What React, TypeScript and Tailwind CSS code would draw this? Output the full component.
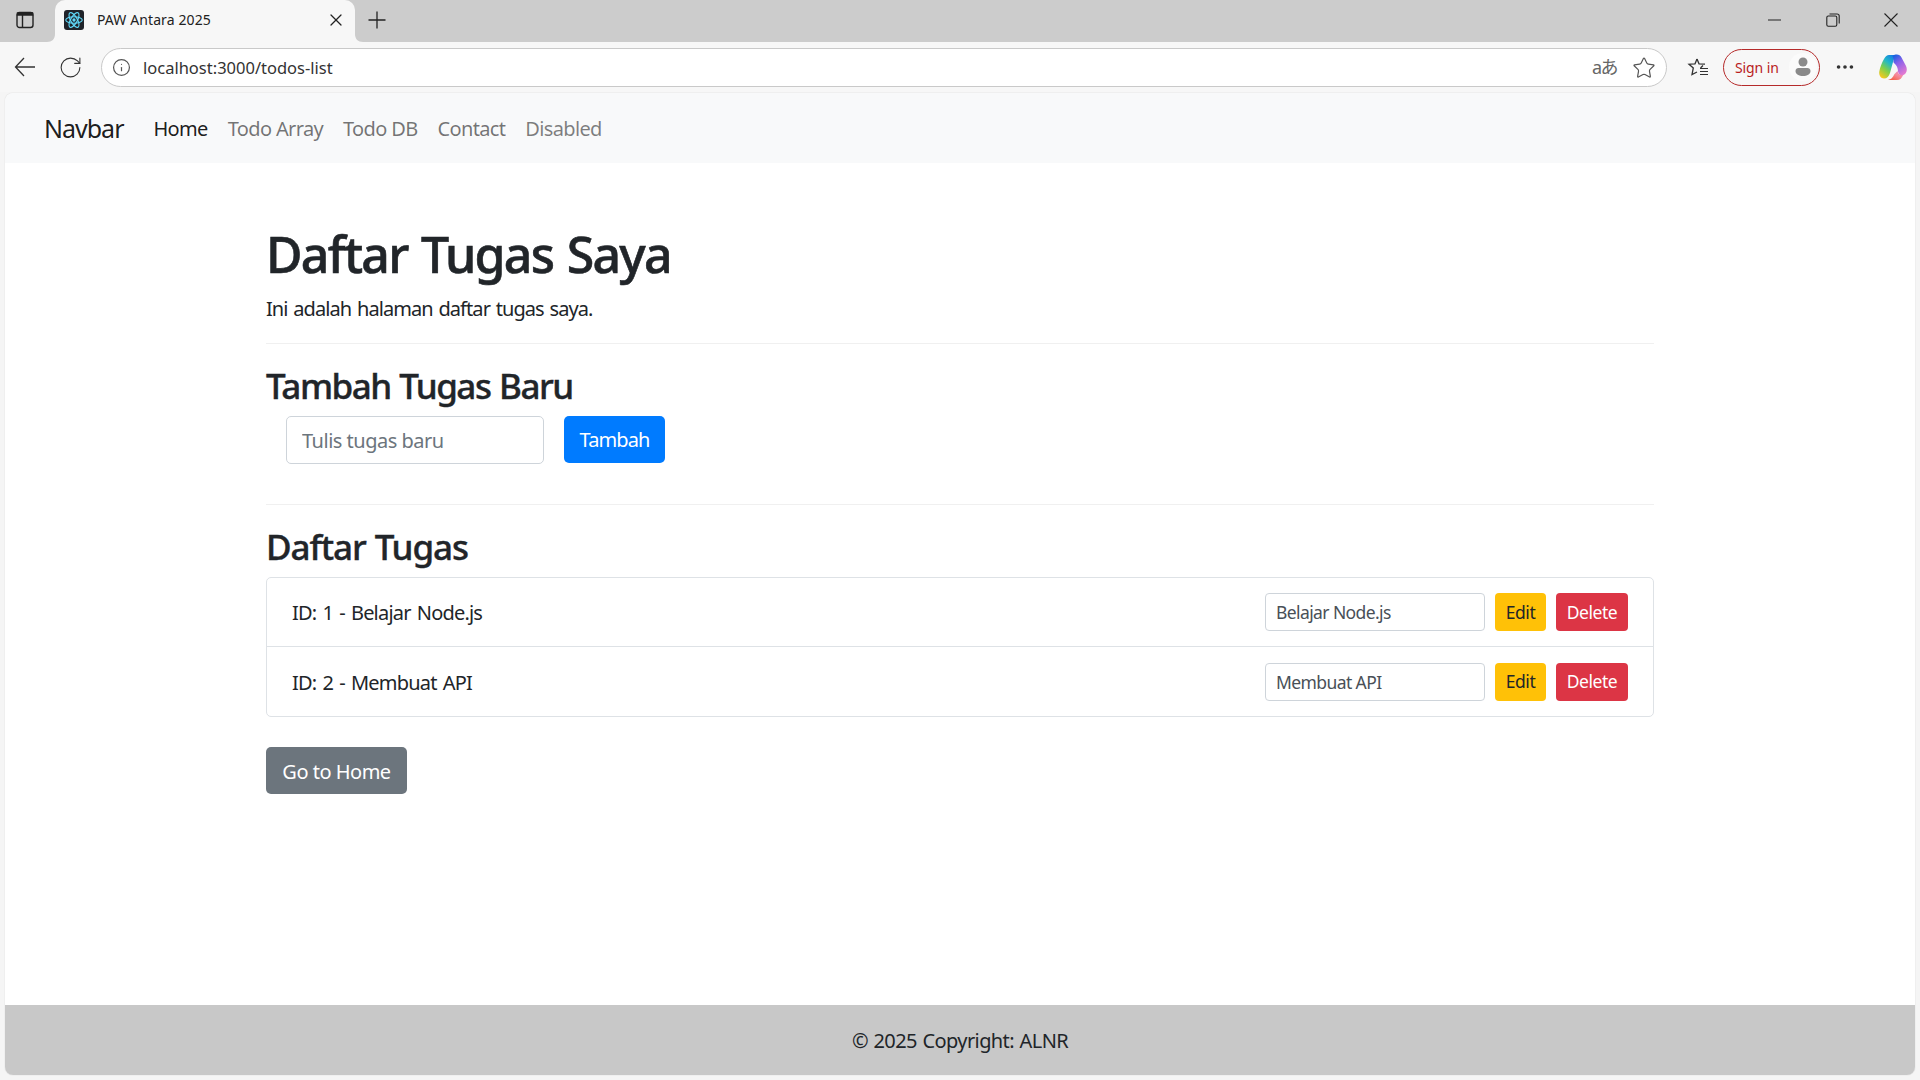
import { RotateCw, Info, Star, X, MoreHorizontal } from 'lucide-react'

function ReactFavicon() {
  return (
    <div className="w-5 h-5 rounded-[3px] bg-[#20232a] flex items-center justify-center">
      <svg width="18" height="18" viewBox="0 0 24 24" fill="none" stroke="#61dafb" strokeWidth="1.5">
        <circle cx="12" cy="12" r="2.2" fill="#61dafb" stroke="none" />
        <ellipse cx="12" cy="12" rx="11" ry="4.4" />
        <ellipse cx="12" cy="12" rx="11" ry="4.4" transform="rotate(60 12 12)" />
        <ellipse cx="12" cy="12" rx="11" ry="4.4" transform="rotate(120 12 12)" />
      </svg>
    </div>
  )
}

function CopilotLogo() {
  return (
    <svg width="28" height="26" viewBox="0 0 28 26">
      <defs>
        <linearGradient id="cpA" x1="0.8" y1="0" x2="0.2" y2="1">
          <stop offset="0" stopColor="#1477e6" />
          <stop offset="0.35" stopColor="#22b8c8" />
          <stop offset="0.65" stopColor="#7fd04a" />
          <stop offset="1" stopColor="#f7c81e" />
        </linearGradient>
        <linearGradient id="cpB" x1="0.2" y1="0" x2="0.7" y2="1">
          <stop offset="0" stopColor="#1660e0" />
          <stop offset="0.4" stopColor="#8a62ea" />
          <stop offset="1" stopColor="#e77bd0" />
        </linearGradient>
        <linearGradient id="cpC" x1="0" y1="1" x2="1" y2="0">
          <stop offset="0" stopColor="#f4552f" />
          <stop offset="0.6" stopColor="#f58ca0" />
          <stop offset="1" stopColor="#e77bd0" />
        </linearGradient>
      </defs>
      <path d="M10 1 H18 C16 2.500 15 4.500 14 8 L11 19 C10 22.500 8 24.500 5 24.500 C1.500 24.500 -0.300 21 0.300 17.500 C1 13 3 8.500 5 5 C6.500 2.500 8 1 10 1 z" fill="url(#cpA)" />
      <path d="M13.500 2 C17 -0.500 21 0.200 22.500 3.500 L27 12 C28.800 16 27.500 20.500 23.500 21.500 C21 21.500 19.500 20 19 17.500 C19 14 17.500 11 15.500 9.500 C14.500 8.800 14.300 8 14.500 7 C14.800 5 14.300 3.500 13.500 2 z" fill="url(#cpB)" />
      <path d="M9 26 H18 C21 26 23 24 24 21 C21 21.500 19 20 18.500 17 L15.500 20 C14 23.500 12 25.500 9 26 z" fill="url(#cpC)" />
    </svg>
  )
}

function Toolbar() {
  return (
    <div className="h-[50px] bg-[#f7f7f7] flex items-center text-[#333]">
      <div className="w-[50px] flex justify-center">
        <svg width="22" height="20" viewBox="0 0 22 20" fill="none" stroke="#333" strokeWidth="1.300">
          <path d="M10 1 L1.500 10 L10 19 M1.500 10 H21" />
        </svg>
      </div>
      <div className="w-[41px] flex justify-center">
        <RotateCw size={25} strokeWidth={1.050} />
      </div>
      <div className="ml-[10px] w-[1566px] h-[39px] mt-[1px] rounded-full border border-[#c9c9c9] bg-white flex items-center pl-[10px] pr-[8px]">
        <Info size={19} strokeWidth={1.500} className="text-[#555]" />
        <span className="ml-[12px] mt-[1px] text-[16.500px] text-[#333] whitespace-nowrap">
          localhost:3000/todos-list
        </span>
        <span className="ml-auto text-[18px] text-[#666] font-['Noto_Sans','Noto_Sans_CJK_JP',sans-serif] tracking-[-1.500px]">aあ</span>
        <Star size={24} strokeWidth={1.200} className="ml-[15px] mr-[2px] text-[#555]" />
      </div>
      <svg className="ml-[20px]" width="22" height="22" viewBox="0 0 22 22" fill="none" stroke="#333" strokeWidth="1.300">
        <path d="M10 3 L12 7.800 L18 8.200 M13.500 12 L16 9.500 M10 3 L8 7.800 L2 8.200 L6.300 12 L5 18.500 L10 16" />
        <path d="M13 12.500 h8 M13 15.500 h8 M13 18.500 h8" strokeWidth="1" />
      </svg>
      <div className="ml-[14px] w-[97px] h-[37px] rounded-full border-[1.500px] border-[#b52a2a] flex items-center pl-[11px] pr-[2px]">
        <span className="text-[14px] text-[#b91c1c] tracking-[-0.1px] whitespace-nowrap">Sign in</span>
        <div className="ml-auto w-[28px] h-[28px] rounded-full bg-[#fbfbfb] flex items-center justify-center">
          <svg width="16" height="20" viewBox="0 0 16 20" fill="#8a8a8a">
            <circle cx="8" cy="5" r="4.500" />
            <path d="M0.500 14 c0 -2 1.500 -3 3 -3 h9 c1.500 0 3 1 3 3 c0 3.500 -3.500 5 -7.500 5 s-7.500 -1.500 -7.500 -5 z" />
          </svg>
        </div>
      </div>
      <MoreHorizontal size={22} strokeWidth={2} className="ml-[14px] text-[#333]" />
      <div className="ml-[23px]">
        <CopilotLogo />
      </div>
    </div>
  )
}

function TabStrip() {
  return (
    <div className="h-[42px] bg-[#cccccc] flex items-center">
      <div className="w-[50px] mr-[5px] flex justify-center mb-[2px]">
        <svg width="18" height="18" viewBox="0 0 18 18" fill="none" stroke="#222" strokeWidth="1.400">
          <rect x="1" y="1.500" width="16" height="15" rx="2.500" />
          <path d="M1.500 4 H16.500 V2 H1.500 z" fill="#222" />
          <path d="M6.500 4 V16" />
        </svg>
      </div>
      <div className="relative w-[300px] h-[42px] bg-[#f7f7f7] rounded-t-[10px] flex items-center pl-[9px] pr-[9px] pb-[2px]">
        <svg className="absolute left-[-8px] bottom-0" width="8" height="8" viewBox="0 0 8 8">
          <path d="M8 0 V8 H0 C5 8 8 5 8 0 z" fill="#f7f7f7" />
        </svg>
        <svg className="absolute right-[-8px] bottom-0" width="8" height="8" viewBox="0 0 8 8">
          <path d="M0 0 V8 H8 C3 8 0 5 0 0 z" fill="#f7f7f7" />
        </svg>
        <ReactFavicon />
        <span className="ml-[13px] mb-[1px] text-[14px] text-[#222] tracking-[0.1px] whitespace-nowrap">PAW Antara 2025</span>
        <X size={20} strokeWidth={1.500} className="ml-auto text-[#222]" />
      </div>
      <div className="ml-[13px] mb-[2px]">
        <svg width="18" height="18" viewBox="0 0 18 18" stroke="#222" strokeWidth="1.300">
          <path d="M9 0.500 V17.500 M0.500 9 H17.500" />
        </svg>
      </div>
      <div className="ml-auto flex items-center mb-[2px]">
        <svg className="mr-[45px]" width="13" height="2" viewBox="0 0 13 2" stroke="#222" strokeWidth="1">
          <path d="M0 1 H13" />
        </svg>
        <svg className="mr-[44px]" width="14" height="14" viewBox="0 0 14 14" fill="none" stroke="#222" strokeWidth="1.100">
          <rect x="0.800" y="3" width="10" height="10.300" rx="1.500" />
          <path d="M3.500 1 H11 C12.500 1 13.200 1.800 13.200 3 V10.500" />
        </svg>
        <svg className="mr-[22px]" width="14" height="14" viewBox="0 0 14 14" stroke="#222" strokeWidth="1.100">
          <path d="M0.500 0.500 L13.500 13.500 M13.500 0.500 L0.500 13.500" />
        </svg>
      </div>
    </div>
  )
}

function TodoRow({ id, title }: { id: number; title: string }) {
  return (
    <div className="flex items-center pl-[25px] pr-[25px] h-[69px] text-[20px] first:border-b first:border-[#dee2e6]">
      <span className="mt-[2px] tracking-[-0.8px] [word-spacing:1.700px] text-[#212529] whitespace-nowrap">ID: {id} - {title}</span>
      <input
        readOnly
        value={title}
        className="ml-auto w-[220px] h-[38px] px-[10px] border border-[#ced4da] rounded-[4px] text-[17.500px] tracking-[-0.600px] text-[#495057] outline-none bg-white"
      />
      <button className="ml-[10px] w-[51px] h-[38px] rounded-[4px] bg-[#ffc107] text-[17.500px] tracking-[-0.450px] text-[#212529]">Edit</button>
      <button className="ml-[10px] w-[72px] h-[38px] rounded-[4px] bg-[#dc3545] text-[17.500px] tracking-[-0.450px] text-white">Delete</button>
    </div>
  )
}

export default function App() {
  return (
    <div className="h-[1080px] w-[1920px] overflow-hidden bg-[#f5f5f5] flex flex-col font-['Noto_Sans',sans-serif]">
      <TabStrip />
      <Toolbar />
      <div className="mx-[5px] h-[982px] mt-[1px] rounded-[8px] overflow-hidden bg-white flex flex-col shadow-[0_0_1px_rgba(0,0,0,0.25)]">
        <nav className="h-[70px] shrink-0 bg-[#f8f9fa] flex items-center pl-[39px] pt-[2px] text-[20px]">
          <span className="text-[25px] tracking-[-1px] text-black/90 mr-[30px]">Navbar</span>
          <div className="flex gap-[20px] tracking-[-0.650px] text-black/55">
            <a className="text-black/90">Home</a>
            <a>Todo Array</a>
            <a>Todo DB</a>
            <a>Contact</a>
            <a className="text-black/50">Disabled</a>
          </div>
        </nav>

        <main className="flex-1 px-[261px] text-[#212529]">
          <h1 className="mt-[61px] text-[50px] leading-[60px] font-medium [-webkit-text-stroke:0.6px] tracking-[-1.700px] [word-spacing:2px]">Daftar Tugas Saya</h1>
          <p className="mt-[10px] text-[20px] leading-[30px] tracking-[-0.930px] [word-spacing:1.500px]">Ini adalah halaman daftar tugas saya.</p>
          <hr className="mt-[19px] border-t border-[#f0f0f0]" />
          <h3 className="mt-[21px] text-[35px] leading-[42px] font-medium [-webkit-text-stroke:0.4px] tracking-[-1.500px] [word-spacing:1px]">Tambah Tugas Baru</h3>
          <div className="mt-[9px] ml-[20px] flex items-start gap-[20px]">
            <input
              placeholder="Tulis tugas baru"
              className="w-[258px] h-[48px] px-[15px] border border-[#ced4da] rounded-[5px] text-[20px] tracking-[-0.500px] placeholder:text-[#6c757d] outline-none"
            />
            <button className="w-[101px] h-[47px] rounded-[5px] bg-[#007bff] text-white text-[20px] tracking-[-0.900px]">Tambah</button>
          </div>
          <hr className="mt-[40px] border-t border-[#f0f0f0]" />
          <h3 className="mt-[21px] text-[35px] leading-[42px] font-medium [-webkit-text-stroke:0.4px] tracking-[-1.100px] [word-spacing:1px]">Daftar Tugas</h3>
          <div className="mt-[9px] border border-[#dee2e6] rounded-[5px] w-[1388px] flex flex-col">
            <TodoRow id={1} title="Belajar Node.js" />
            <TodoRow id={2} title="Membuat API" />
          </div>
          <button className="mt-[30px] w-[141px] h-[47px] pt-[2px] rounded-[5px] bg-[#6c757d] text-white text-[20px] tracking-[-0.500px]">Go to Home</button>
        </main>

        <footer className="h-[70px] shrink-0 bg-[#c8c8c8] flex items-center justify-center pt-[2px] text-[20px] tracking-[-0.600px] [word-spacing:1px] text-[#212529]">
          © 2025 Copyright: ALNR
        </footer>
      </div>
    </div>
  )
}
